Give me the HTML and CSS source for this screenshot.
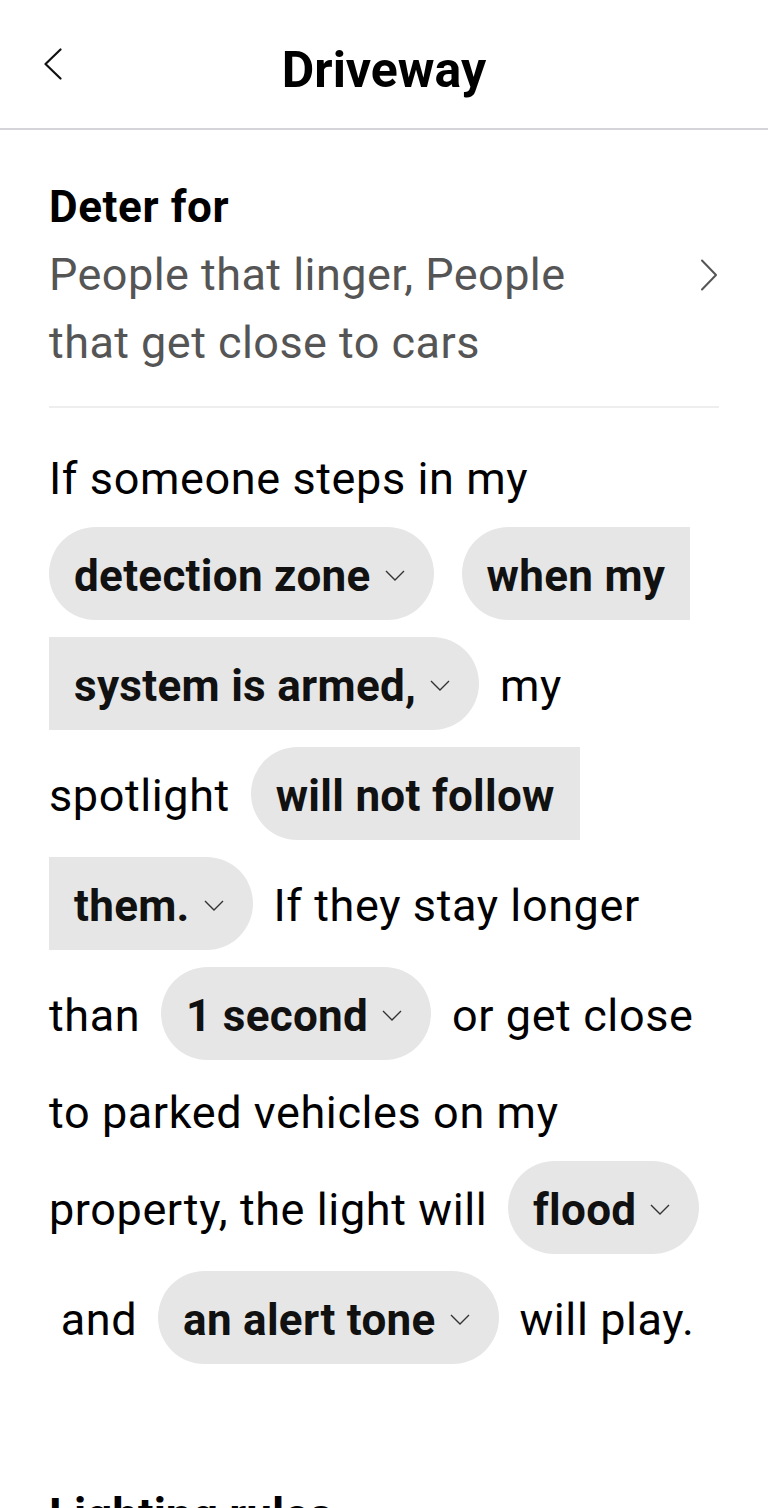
FILE: index.html
```html
<!DOCTYPE html>
<html>
  <head>
    <meta charset="UTF-8">
    <title>Driveway</title>
    <link rel="stylesheet" href="styles.css">
  </head>
  <body>
    <header class="topbar">
      <button class="back-btn" aria-label="Back">
        <svg width="20" height="32" viewBox="0 0 20 32"><path d="M17.5 1.5 L2.5 16 L17.5 30.5" fill="none" stroke="#111" stroke-width="2.2" stroke-linecap="round" stroke-linejoin="round"/></svg>
      </button>
      <h1 class="topbar-title">Driveway</h1>
      <span></span>
    </header>

    <main class="content">
      <section class="deter">
        <div class="deter-text">
          <h2 class="deter-label">Deter for</h2>
          <p class="deter-value">People that linger, People that get close to cars</p>
        </div>
        <svg class="deter-arrow" width="18" height="32" viewBox="0 0 18 32"><path d="M2 1.5 L16 16 L2 30.5" fill="none" stroke="#555" stroke-width="2" stroke-linecap="round" stroke-linejoin="round"/></svg>
      </section>

      <p class="rule">
        If someone steps in my<br>
        <span class="chip chip-lead">detection zone<svg class="caret" width="20" height="11" viewBox="0 0 20 11"><path d="M1 1 L10 10 L19 1"/></svg></span><span class="chip chip-head">when my</span><br>
        <span class="chip chip-tail">system is armed,<svg class="caret" width="20" height="11" viewBox="0 0 20 11"><path d="M1 1 L10 10 L19 1"/></svg></span> my<br>
        spotlight <span class="chip chip-head">will not follow</span><br>
        <span class="chip chip-tail">them.<svg class="caret" width="20" height="11" viewBox="0 0 20 11"><path d="M1 1 L10 10 L19 1"/></svg></span> If they stay longer<br>
        than <span class="chip">1 second<svg class="caret" width="20" height="11" viewBox="0 0 20 11"><path d="M1 1 L10 10 L19 1"/></svg></span> or get close<br>
        to parked vehicles on my<br>
        property, the light will <span class="chip">flood<svg class="caret" width="20" height="11" viewBox="0 0 20 11"><path d="M1 1 L10 10 L19 1"/></svg></span><br>
        &nbsp;and <span class="chip">an alert tone<svg class="caret" width="20" height="11" viewBox="0 0 20 11"><path d="M1 1 L10 10 L19 1"/></svg></span> will play.
      </p>

      <h2 class="section-title">Lighting rules</h2>
    </main>
  </body>
</html>
```

FILE: styles.css
```css
html,
body {
  height: 100%;
  overflow: hidden;
}

body {
  margin: 0;
  font-family: Roboto, "Liberation Sans", sans-serif;
  color: #000;
  background-color: #fff;
}

/* top bar */

.topbar {
  display: grid;
  grid-template-columns: 1fr auto 1fr;
  height: 116px;
  padding-top: 12px;
  border-bottom: 2px solid #d4d4d9;
}

.back-btn {
  align-self: start;
  justify-self: start;
  margin: 36px 0 0 43px;
  padding: 0;
  border: none;
  background: transparent;
  cursor: pointer;
}

.back-btn svg {
  display: block;
}

.topbar-title {
  margin: 0;
  font-size: 50px;
  font-weight: 700;
  line-height: 116px;
}

/* page body */

.content {
  padding: 0 49px;
}

.deter {
  display: flex;
  justify-content: space-between;
  align-items: flex-start;
  padding: 47px 0 29px;
  border-bottom: 2px solid #eeeeee;
}

.deter-label {
  margin: 0;
  font-size: 44px;
  font-weight: 700;
  line-height: 60px;
  letter-spacing: 0.6px;
}

.deter-value {
  max-width: 580px;
  margin: 4px 0 0;
  font-size: 45px;
  line-height: 68px;
  letter-spacing: 0.45px;
  color: #555;
}

.deter-arrow {
  flex-shrink: 0;
  margin: 82px 1px 0 0;
}

/* rule sentence with dropdown chips */

.rule {
  margin: 29px 0 0;
  font-size: 45px;
  line-height: 84px;
  letter-spacing: 0.6px;
  white-space: nowrap;
}

.chip {
  display: inline-block;
  margin: 6px 9px 11px;
  padding: 5px 29px 0 25px;
  font-size: 44px;
  line-height: 88px;
  font-weight: 700;
  letter-spacing: 0.3px;
  color: #111;
  background-color: #e6e6e6;
  border-radius: 47px;
}

.chip + .chip {
  margin-left: 19px;
}

.chip-lead,
.chip-tail {
  margin-left: 0;
}

.chip-head {
  padding-right: 25px;
  border-radius: 47px 0 0 47px;
}

.chip-tail {
  border-radius: 0 47px 47px 0;
}

.caret {
  margin-left: 14px;
  vertical-align: 10px;
  fill: none;
  stroke: #333;
  stroke-width: 1.4;
}

.section-title {
  margin: 110px 0 0;
  font-size: 46px;
  font-weight: 700;
  line-height: 60px;
}
```
